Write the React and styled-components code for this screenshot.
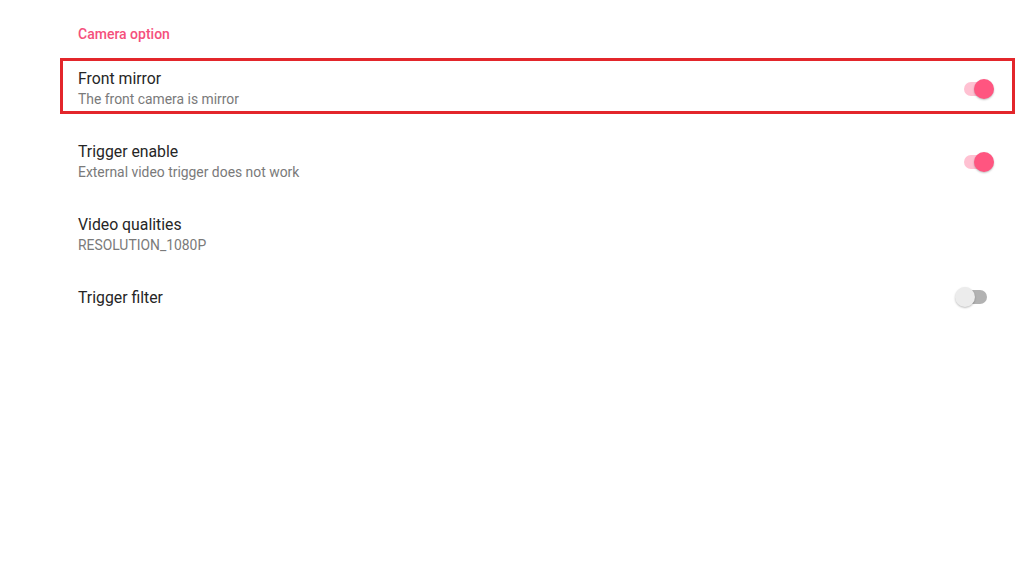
import styled, { createGlobalStyle } from "styled-components";

const GlobalStyle = createGlobalStyle`
  html, body {
    margin: 0;
    padding: 0;
    background: #ffffff;
    font-family: Roboto, "Noto Sans", sans-serif;
  }
`;

const prefs = [
  {
    title: "Front mirror",
    summary: "The front camera is mirror",
    toggle: true,
    checked: true,
    highlight: true,
  },
  {
    title: "Trigger enable",
    summary: "External video trigger does not work",
    toggle: true,
    checked: true,
  },
  { title: "Video qualities", summary: "RESOLUTION_1080P" },
  { title: "Trigger filter", toggle: true, checked: false },
];

export default function App() {
  return (
    <Page>
      <GlobalStyle />
      <CategoryTitle>Camera option</CategoryTitle>
      {prefs.map((p) => (
        <Row key={p.title}>
          {p.highlight && <Highlight />}
          <TextBlock>
            <Title>{p.title}</Title>
            {p.summary && <Summary>{p.summary}</Summary>}
          </TextBlock>
          {p.toggle && (
            <Switch>
              <Track $on={p.checked} />
              <Thumb $on={p.checked} />
            </Switch>
          )}
        </Row>
      ))}
    </Page>
  );
}

const Page = styled.div`
  width: 1018px;
  height: 572px;
  background: #ffffff;
  display: flex;
  flex-direction: column;
`;

const CategoryTitle = styled.div`
  padding: 24px 0 8px 78px;
  height: 20px;
  line-height: 20px;
  font-size: 14px;
  font-weight: 500;
  color: #f5507c;
`;

const Row = styled.div`
  position: relative;
  display: flex;
  align-items: center;
  padding: 17px 23px 15px 78px;
`;

const Highlight = styled.div`
  position: absolute;
  left: 60px;
  right: 3px;
  top: 6px;
  bottom: 11px;
  border: 3px solid #e3262b;
  pointer-events: none;
`;

const TextBlock = styled.div`
  flex: 1;
  display: flex;
  flex-direction: column;
`;

const Title = styled.div`
  font-size: 15.8px;
  line-height: 20px;
  color: #262626;
`;

const Summary = styled.div`
  font-size: 13.9px;
  line-height: 21px;
  color: #7a7a7a;
`;

const Switch = styled.div`
  position: relative;
  width: 40px;
  height: 20px;
  flex-shrink: 0;
  margin-top: -2px;
`;

const Track = styled.div`
  position: absolute;
  left: 9px;
  top: 3px;
  width: 23px;
  height: 14px;
  border-radius: 7px;
  background: ${(p) => (p.$on ? "#ffc1d2" : "#b2b2b2")};
`;

const Thumb = styled.div`
  position: absolute;
  top: 0;
  left: ${(p) => (p.$on ? "19px" : "0")};
  width: 20px;
  height: 20px;
  border-radius: 50%;
  background: ${(p) => (p.$on ? "#ff5580" : "#ececec")};
  box-shadow: 0 1px 2px rgba(0, 0, 0, 0.25);
`;
